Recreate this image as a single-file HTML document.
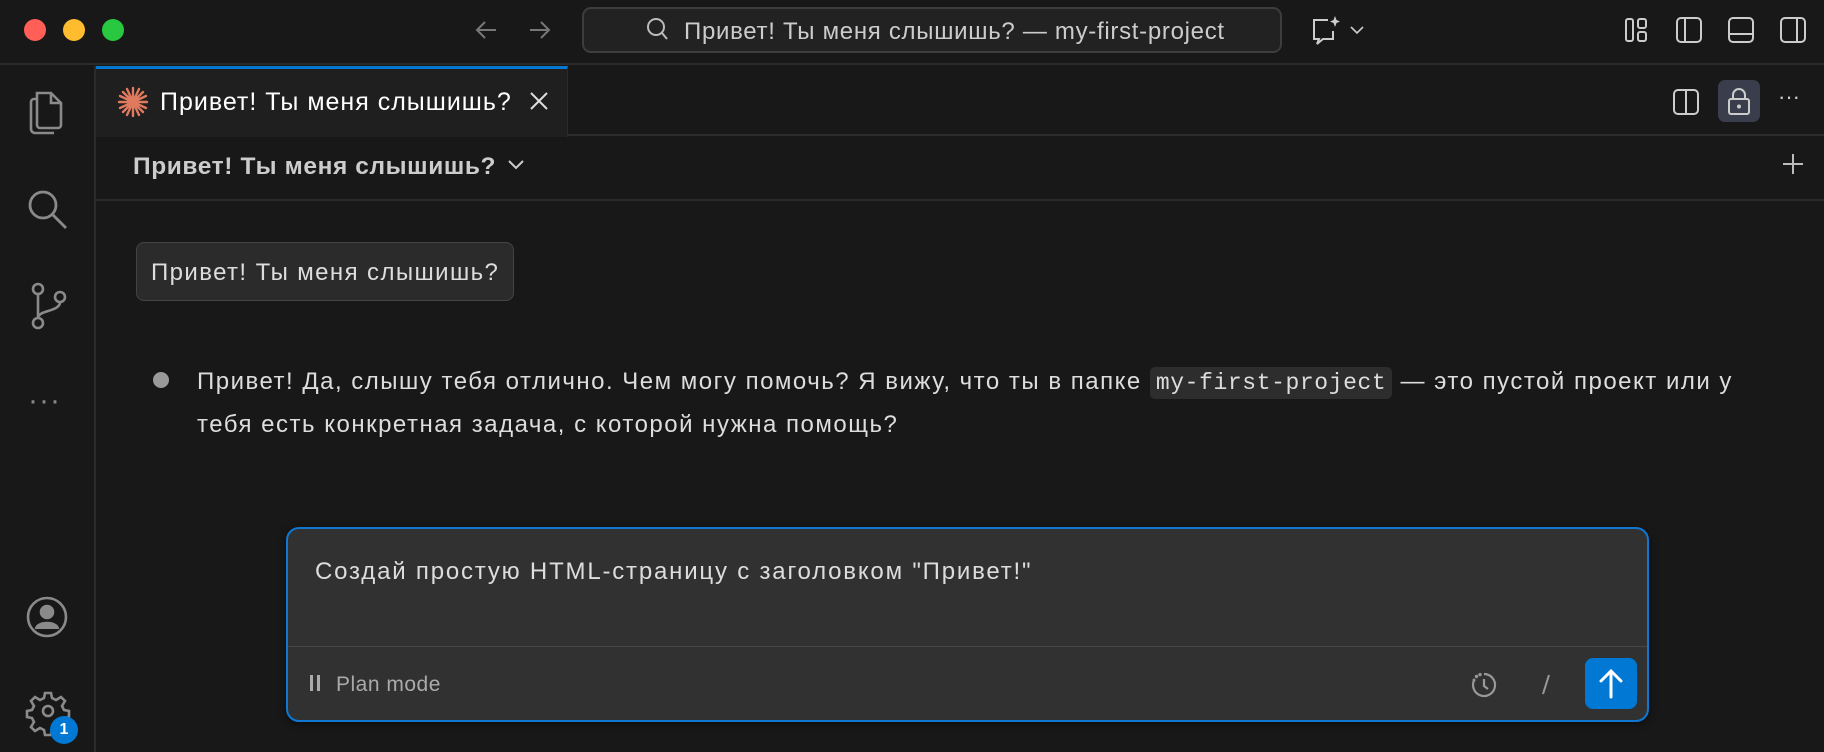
<!DOCTYPE html>
<html><head><meta charset="utf-8">
<style>
*{box-sizing:border-box;margin:0;padding:0}
body{width:1824px;height:752px;background:#181818;font-family:"Liberation Sans","Noto Sans CJK SC",sans-serif;color:#ccc;position:relative;overflow:hidden}
.abs{position:absolute}
.tl{position:absolute;top:19px;width:22px;height:22px;border-radius:50%}
svg{position:absolute;overflow:visible}
</style></head><body>
<!-- title bar -->
<div class="abs" style="left:0;top:0;width:1824px;height:65px;background:#181818;border-bottom:2px solid #2b2b2b"></div>
<div class="tl" style="left:24px;background:#ff5f57"></div>
<div class="tl" style="left:63px;background:#febc2e"></div>
<div class="tl" style="left:102px;background:#28c840"></div>
<svg style="left:474px;top:20px" width="24" height="20" fill="none" stroke="#777" stroke-width="2"><path d="M22 10H3M11 2 3 10l8 8"/></svg>
<svg style="left:528px;top:20px" width="24" height="20" fill="none" stroke="#777" stroke-width="2"><path d="M2 10h19M13 2l8 8-8 8"/></svg>
<div class="abs" style="left:582px;top:7px;width:700px;height:46px;background:#222;border:2px solid #3d3d3d;border-radius:9px"></div>
<svg style="left:646px;top:17px" width="22" height="24" fill="none" stroke="#bbb" stroke-width="2"><circle cx="10" cy="10" r="8"/><path d="M16 16l5 6"/></svg>
<div class="abs" style="left:684px;top:18px;font-size:24px;letter-spacing:0.7px;color:#ccc;white-space:nowrap">Привет! Ты меня слышишь? — my-first-project</div>
<svg style="left:1310px;top:14px" width="32" height="32" fill="none" stroke="#ccc" stroke-width="2"><path d="M18 6H4v19h5l-2 5 6-5h10v-8"/><path d="M25 2l1.5 4 3.5 1.5-3.5 1.5L25 13l-1.5-4L20 7.5 23.5 6z" fill="#ccc" stroke="none"/></svg>
<svg style="left:1350px;top:25px" width="14" height="10" fill="none" stroke="#ccc" stroke-width="1.6"><path d="M1 2l6 6 6-6"/></svg>
<svg style="left:1624px;top:17px" width="24" height="26" fill="none" stroke="#ccc" stroke-width="2"><rect x="2" y="2" width="7" height="22" rx="2"/><rect x="14" y="2" width="8" height="9" rx="2"/><rect x="14" y="15" width="8" height="9" rx="2"/></svg>
<svg style="left:1676px;top:17px" width="26" height="26" fill="none" stroke="#ccc" stroke-width="2"><rect x="1" y="1" width="24" height="24" rx="4"/><path d="M9 1v24"/></svg>
<svg style="left:1728px;top:17px" width="26" height="26" fill="none" stroke="#ccc" stroke-width="2"><rect x="1" y="1" width="24" height="24" rx="4"/><path d="M1 17h24"/></svg>
<svg style="left:1780px;top:17px" width="26" height="26" fill="none" stroke="#ccc" stroke-width="2"><rect x="1" y="1" width="24" height="24" rx="4"/><path d="M17 1v24"/></svg>
<!-- activity bar -->
<div class="abs" style="left:0;top:66px;width:96px;height:686px;background:#181818;border-right:2px solid #2b2b2b"></div>
<svg style="left:27px;top:89px" width="40" height="48" fill="none" stroke="#8a8a8a" stroke-width="2.6"><path d="M10 4h14l10 10v22a3 3 0 0 1-3 3H13a3 3 0 0 1-3-3z"/><path d="M24 4v10h10"/><path d="M10 10H7a3 3 0 0 0-3 3v27a4 4 0 0 0 4 4h19"/></svg>
<svg style="left:26px;top:188px" width="44" height="44" fill="none" stroke="#8a8a8a" stroke-width="2.8"><circle cx="17" cy="17" r="13"/><path d="M27 27l13 13"/></svg>
<svg style="left:28px;top:282px" width="40" height="48" fill="none" stroke="#8a8a8a" stroke-width="2.6"><circle cx="10" cy="7" r="5"/><circle cx="10" cy="41" r="5"/><circle cx="32" cy="15" r="5"/><path d="M10 12v24M32 20c0 10-22 8-22 16"/></svg>
<div class="abs" style="left:28px;top:384px;font-size:30px;color:#8a8a8a;letter-spacing:1px">···</div>
<svg style="left:26px;top:596px" width="42" height="42" fill="none" stroke="#8a8a8a" stroke-width="2.6"><circle cx="21" cy="21" r="19"/><circle cx="21" cy="16" r="6" fill="#8a8a8a"/><path d="M10 33c1-8 21-8 22 0" fill="#8a8a8a"/></svg>
<svg style="left:27px;top:690px" width="42" height="42" fill="none" stroke="#8a8a8a" stroke-width="2.6"><path d="M18 3h6l1 5 4 2 5-3 4 4-3 5 2 4 5 1v6l-5 1-2 4 3 5-4 4-5-3-4 2-1 5h-6l-1-5-4-2-5 3-4-4 3-5-2-4-5-1v-6l5-1 2-4-3-5 4-4 5 3 4-2z"/><circle cx="21" cy="21" r="5"/></svg>
<div class="abs" style="left:50px;top:716px;width:28px;height:28px;border-radius:50%;background:#0078d4;color:#fff;font-size:16px;font-weight:bold;text-align:center;line-height:28px">1</div>
<!-- tab bar -->
<div class="abs" style="left:96px;top:66px;width:1728px;height:70px;background:#181818;border-bottom:2px solid #2b2b2b"></div>
<div class="abs" style="left:96px;top:66px;width:472px;height:71px;background:#1f1f1f;border-top:3px solid #0078d4;border-right:1px solid #2b2b2b"></div>
<svg style="left:117px;top:86px" width="32" height="32" stroke="#e07a5f" stroke-width="2.4" stroke-linecap="round"><path d="M16 2v28M2 16h28M6 6l20 20M26 6 6 26M10 3l12 26M22 3 10 29M3 10l26 12M29 10 3 22"/></svg>
<div class="abs" style="left:160px;top:88px;font-size:25px;letter-spacing:1px;color:#fff;white-space:nowrap">Привет! Ты меня слышишь?</div>
<svg style="left:530px;top:92px" width="18" height="18" stroke="#ddd" stroke-width="2"><path d="M1 1l16 16M17 1 1 17"/></svg>
<svg style="left:1673px;top:89px" width="26" height="26" fill="none" stroke="#ccc" stroke-width="2"><rect x="1" y="1" width="24" height="24" rx="4"/><path d="M13 1v24"/></svg>
<div class="abs" style="left:1718px;top:80px;width:42px;height:42px;background:#3a3d4b;border-radius:7px"></div>
<svg style="left:1727px;top:87px" width="24" height="30" fill="none" stroke="#ccc" stroke-width="2"><rect x="2" y="12" width="20" height="15" rx="2"/><path d="M6 12V8a6 6 0 0 1 12 0v4"/><circle cx="12" cy="19.5" r="1" fill="#ccc"/></svg>
<div class="abs" style="left:1778px;top:84px;font-size:22px;color:#ccc">···</div>
<!-- subheader -->
<div class="abs" style="left:96px;top:137px;width:1728px;height:64px;border-bottom:2px solid #2b2b2b"></div>
<div class="abs" style="left:133px;top:153px;font-size:24.5px;letter-spacing:0.6px;font-weight:bold;color:#ccc;white-space:nowrap">Привет! Ты меня слышишь?</div>
<svg style="left:508px;top:160px" width="16" height="10" fill="none" stroke="#ccc" stroke-width="2"><path d="M1 1l7 7 7-7"/></svg>
<svg style="left:1782px;top:153px" width="22" height="22" stroke="#bbb" stroke-width="2"><path d="M11 1v20M1 11h20"/></svg>
<!-- user bubble -->
<div class="abs" style="left:136px;top:242px;width:378px;height:59px;background:#2b2b2b;border:1.5px solid #444;border-radius:8px"></div>
<div class="abs" style="left:151px;top:259px;font-size:24px;letter-spacing:1.4px;color:#ddd;white-space:nowrap">Привет! Ты меня слышишь?</div>
<!-- assistant -->
<div class="abs" style="left:153px;top:372px;width:16px;height:16px;border-radius:50%;background:#9a9a9a"></div>
<div class="abs" style="left:197px;top:361px;width:1600px;font-size:24px;letter-spacing:1.5px;line-height:41px;color:#ddd;white-space:nowrap">Привет! Да, слышу тебя отлично. Чем могу помочь? Я вижу, что ты в папке <span style="font-family:'Liberation Mono',monospace;font-size:23px;letter-spacing:0.6px;background:#2d2d2d;border-radius:5px;padding:3px 6px">my-first-project</span> — это пустой проект или у<br>тебя есть конкретная задача, с которой нужна помощь?</div>
<!-- input -->
<div class="abs" style="left:286px;top:527px;width:1363px;height:195px;background:#313131;border:2px solid #0e78d2;border-radius:13px;box-shadow:0 2px 8px rgba(0,0,0,.5)"></div>
<div class="abs" style="left:288px;top:646px;width:1359px;height:1px;background:#474747"></div>
<div class="abs" style="left:315px;top:558px;font-size:24px;letter-spacing:1.8px;color:#ddd;white-space:nowrap">Создай простую HTML-страницу с заголовком "Привет!"</div>
<div class="abs" style="left:310px;top:675px;width:3px;height:16px;background:#aaa"></div>
<div class="abs" style="left:317px;top:675px;width:3px;height:16px;background:#aaa"></div>
<div class="abs" style="left:336px;top:673px;font-size:21px;letter-spacing:0.5px;color:#aaa;white-space:nowrap">Plan mode</div>
<svg style="left:1471px;top:672px" width="26" height="26" fill="none" stroke="#999" stroke-width="2.2"><path d="M13 2a11 11 0 1 1-9.5 5.5"/><path d="M13 7v7l4 3"/><circle cx="5.5" cy="4.5" r=".6" fill="#999"/><circle cx="9" cy="2.6" r=".6" fill="#999"/><circle cx="3" cy="8" r=".4" fill="#999"/></svg>
<svg style="left:1540px;top:674px" width="12" height="22" stroke="#999" stroke-width="2"><path d="M9 1 3 20"/></svg>
<div class="abs" style="left:1585px;top:658px;width:52px;height:51px;background:#0078d4;border-radius:8px"></div>
<svg style="left:1597px;top:668px" width="28" height="32" fill="none" stroke="#fff" stroke-width="3" stroke-linecap="round"><path d="M14 29V3M4 13 14 3l10 10"/></svg>
</body></html>
